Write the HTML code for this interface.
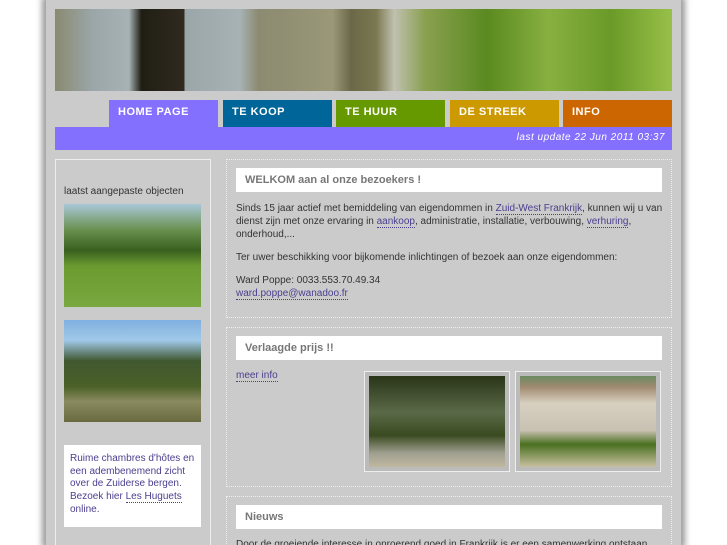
<!DOCTYPE html>
<html><head><meta charset="utf-8"><style>
*{margin:0;padding:0;box-sizing:border-box}
html,body{width:727px;height:545px;overflow:hidden}
body{background:#fff;font-family:"Liberation Sans",sans-serif;font-size:11px;color:#333;position:relative}
.wrap{position:absolute;left:45px;top:0;width:637px;height:545px;background:#cbcbcb;box-shadow:0 0 6px 3px #999;border-left:1px solid #aaa;border-right:1px solid #aaa}
.ab{position:absolute}
.banner{left:55px;top:9px;width:617px;height:82px;background:linear-gradient(90deg,#8a8a70 0%,#9aa6a8 6%,#a6b2b4 12%,#201e14 14%,#302a20 21%,#9aa6a8 21%,#a6b2b4 30%,#8c8a70 33%,#9a9878 45%,#6a6848 48%,#7a7850 52%,#c0c0b0 55%,#8aa050 60%,#5a8a20 70%,#88b040 80%,#6a9a28 90%,#98c048 100%)}
.tab{top:100px;height:27px;color:#fff;font-weight:bold;font-size:11px;letter-spacing:.5px;padding:6px 0 0 9px}
.bar{left:55px;top:127px;width:617px;height:23px;background:#8470ff;color:#fff;font-style:italic;font-size:10px;text-align:right;padding:5px 7px 0 0;letter-spacing:.5px}
.left{left:55px;top:159px;width:156px;height:386px;border:1px solid #eee;border-bottom:none}
.box{border:1px dotted #eee}
.hd{background:#fff;color:#777;font-weight:bold;font-size:11px;padding:6px 9px;height:24px}
a{color:#4a3f8f;text-decoration:none;border-bottom:1px dotted #4a3f8f}
p{line-height:13px}
</style></head><body>
<div class="wrap"></div>
<div class="ab banner"></div>
<div class="ab tab" style="left:109px;width:109px;background:#8470ff">HOME PAGE</div>
<div class="ab tab" style="left:223px;width:109px;background:#006699">TE KOOP</div>
<div class="ab tab" style="left:336px;width:109px;background:#669900">TE HUUR</div>
<div class="ab tab" style="left:450px;width:109px;background:#cc9900">DE STREEK</div>
<div class="ab tab" style="left:563px;width:109px;background:#cc6600">INFO</div>
<div class="ab bar">last update 22 Jun 2011 03:37</div>
<div class="ab left"></div>
<div class="ab" style="left:64px;top:186px;font-size:10px;color:#333">laatst aangepaste objecten</div>
<div class="ab" style="left:64px;top:204px;width:137px;height:103px;background:linear-gradient(180deg,#a8c8d8 0%,#6a9050 25%,#3a6020 45%,#6a9a30 60%,#7aa840 100%)"></div>
<div class="ab" style="left:64px;top:320px;width:137px;height:102px;background:linear-gradient(180deg,#80b0e0 0%,#a0c8e8 20%,#405830 40%,#4a6028 65%,#8a8a60 80%,#6a6a40 100%)"></div>
<div class="ab" style="left:64px;top:445px;width:137px;height:82px;background:#fff;padding:8px 6px;color:#4a3f8f;font-size:10px;line-height:12.7px">Ruime chambres d'hôtes en een adembenemend zicht over de Zuiderse bergen. Bezoek hier <a>Les Huguets</a> online.</div>

<div class="ab box" style="left:226px;top:159px;width:446px;height:159px"></div>
<div class="ab hd" style="left:236px;top:168px;width:426px">WELKOM aan al onze bezoekers !</div>
<div class="ab" style="left:236px;top:202px;width:430px;font-size:10px">
<p>Sinds 15 jaar actief met bemiddeling van eigendommen in <a>Zuid-West Frankrijk</a>, kunnen wij u van dienst zijn met onze ervaring in <a>aankoop</a>, administratie, installatie, verbouwing, <a>verhuring</a>, onderhoud,...</p>
<p style="margin-top:10px">Ter uwer beschikking voor bijkomende inlichtingen of bezoek aan onze eigendommen:</p>
<p style="margin-top:10px">Ward Poppe: 0033.553.70.49.34<br><a>ward.poppe@wanadoo.fr</a></p>
</div>

<div class="ab box" style="left:226px;top:327px;width:446px;height:160px"></div>
<div class="ab hd" style="left:236px;top:336px;width:426px">Verlaagde prijs !!</div>
<div class="ab" style="left:236px;top:370px;font-size:10px"><a>meer info</a></div>
<div class="ab" style="left:364px;top:371px;width:146px;height:101px;border:1px solid #eee;background:#bbb;padding:4px"><div style="width:100%;height:100%;background:linear-gradient(180deg,#2a3418 0%,#5a6a48 40%,#3a4a20 65%,#a0a090 85%,#c0b8a0 100%)"></div></div>
<div class="ab" style="left:515px;top:371px;width:146px;height:101px;border:1px solid #eee;background:#bbb;padding:4px"><div style="width:100%;height:100%;background:linear-gradient(180deg,#6a8a60 0%,#a08a70 12%,#d8d0c0 30%,#c8c0b0 60%,#4a7020 75%,#c8c0a0 100%)"></div></div>

<div class="ab box" style="left:226px;top:496px;width:446px;height:60px"></div>
<div class="ab hd" style="left:236px;top:505px;width:426px">Nieuws</div>
<div class="ab" style="left:236px;top:539px;font-size:10px;white-space:nowrap">Door de groeiende interesse in onroerend goed in Frankrijk is er een samenwerking ontstaan</div>
</body></html>
